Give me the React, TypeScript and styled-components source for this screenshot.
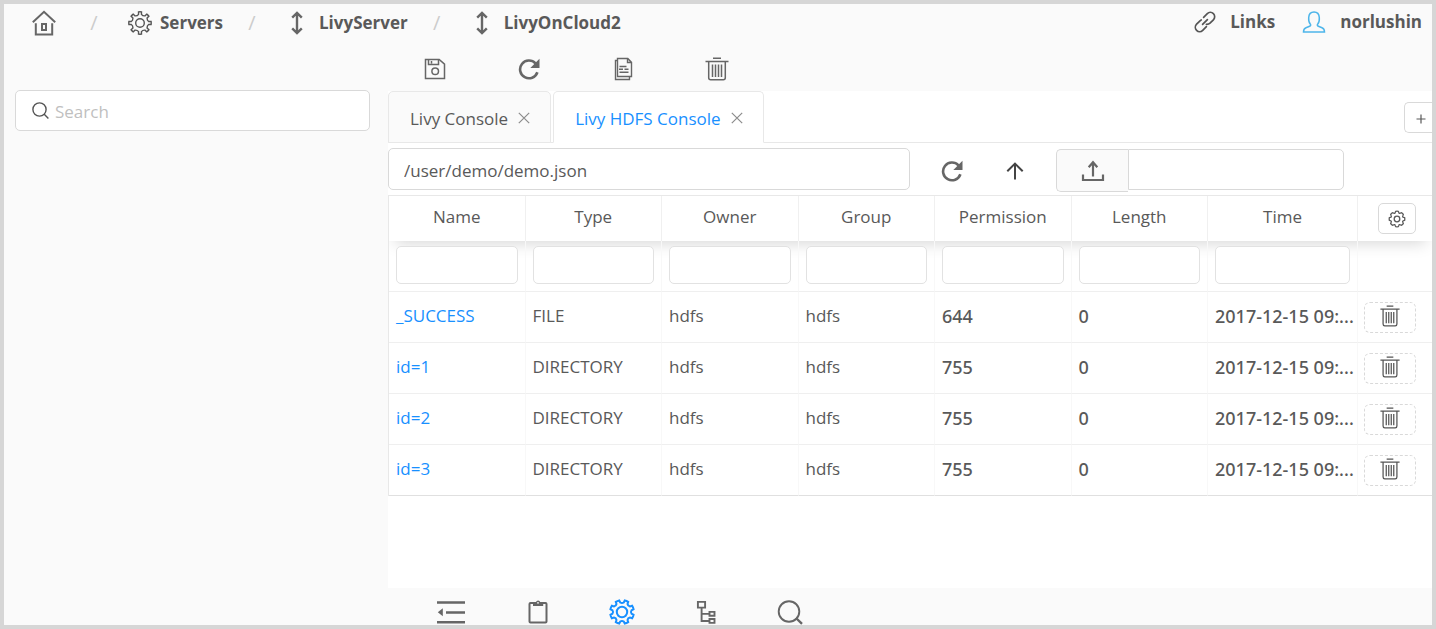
import React from "react";
import styled, { createGlobalStyle } from "styled-components";

const ink = "#595959";
const blue = "#1890ff";
const line = "#e8e8e8";
const control = "#d9d9d9";

const GlobalStyle = createGlobalStyle`
  *, *::before, *::after { box-sizing: border-box; }
  body {
    margin: 0;
    background: #fafafa;
    color: ${ink};
    font-family: "Open Sans", "Noto Sans", sans-serif;
    font-size: 17px;
    line-height: 24px;
  }
  button, input { font: inherit; color: inherit; }
  a { color: inherit; text-decoration: none; }
`;

const Frame = styled.div`
  display: flex;
  flex-direction: column;
  min-height: 100vh;
  border: 4px solid #d6d6d6;
  background: #fafafa;
  overflow: hidden;
`;

const Header = styled.header`
  display: flex;
  justify-content: space-between;
  height: 42px;
  padding: 0 10px 5px 27px;
`;

const Crumbs = styled.nav`
  display: flex;
  align-items: center;
`;

const Account = styled.div`
  display: flex;
  align-items: center;
  gap: 27px;
  padding-bottom: 2px;
`;

const NavLink = styled.a<{ $gap: number }>`
  display: flex;
  align-items: center;
  gap: ${(p) => p.$gap}px;
  font-size: 17px;
  font-weight: 700;
`;

const Slash = styled.span<{ $before?: number; $after: number }>`
  width: 8px;
  margin: 0 ${(p) => p.$after}px 0 ${(p) => p.$before ?? 25}px;
  text-align: center;
  font-size: 20px;
  color: #ccc;
`;

const Body = styled.div`
  display: flex;
  flex: 1;
`;

const Sidebar = styled.aside`
  flex: none;
  width: 384px;
  padding: 44px 18px 0 11px;
`;

const SearchBox = styled.label`
  display: flex;
  align-items: center;
  gap: 6px;
  height: 41px;
  padding: 0 16px;
  border: 1px solid ${control};
  border-radius: 5px;
  background: #fff;
`;

const SearchInput = styled.input`
  flex: 1;
  min-width: 0;
  padding: 2px 0 0;
  border: 0;
  outline: 0;
  background: transparent;
  &::placeholder { color: #bfbfbf; opacity: 1; }
`;

const Main = styled.main`
  display: flex;
  flex: 1;
  flex-direction: column;
  min-width: 0;
`;

const IconButton = styled.button<{ $width: number; $active?: boolean }>`
  display: flex;
  flex: none;
  align-items: center;
  justify-content: center;
  width: ${(p) => p.$width}px;
  padding: 0;
  border: 0;
  background: transparent;
  color: ${(p) => (p.$active ? blue : "#666")};
  cursor: pointer;
`;

const Toolbar = styled.div`
  display: flex;
  height: 45px;
`;

const Footer = styled.footer`
  display: flex;
  align-items: flex-start;
  height: 37px;
  padding: 11px 0 0 18px;
  overflow: hidden;
`;

const Content = styled.section`
  flex: 1;
  background: #fff;
`;

const TabBar = styled.div`
  display: flex;
  gap: 2px;
  height: 52px;
  border-bottom: 1px solid ${line};
`;

const Tab = styled.div<{ $active?: boolean }>`
  display: flex;
  align-items: center;
  gap: 10px;
  height: 52px;
  padding: 2px 20px 0 21px;
  border: 1px solid ${line};
  border-bottom-color: ${(p) => (p.$active ? "#fff" : line)};
  border-radius: 5px 5px 0 0;
  background: ${(p) => (p.$active ? "#fff" : "#fafafa")};
  color: ${(p) => (p.$active ? blue : ink)};
`;

const TabLabel = styled.button`
  padding: 2px 0 0;
  border: 0;
  background: transparent;
  cursor: pointer;
`;

const CloseButton = styled.button`
  display: flex;
  padding: 0;
  border: 0;
  background: transparent;
  color: #8c8c8c;
  cursor: pointer;
`;

const AddTab = styled.button`
  display: flex;
  align-items: center;
  justify-content: center;
  width: 28px;
  height: 31px;
  margin: 11px 0 0 auto;
  padding: 2px 0 0 4px;
  border: 1px solid ${control};
  border-right: 0;
  border-radius: 5px 0 0 5px;
  background: #fff;
`;

const PathBar = styled.div`
  display: flex;
  height: 52px;
  padding-top: 5px;
`;

const PathInput = styled.input`
  width: 50%;
  height: 42px;
  padding: 2px 15px 0;
  border: 1px solid ${control};
  border-radius: 5px;
  background: #fff;
`;

const PathActions = styled.div`
  display: flex;
  height: 46px;
  margin: 0 10px;
`;

const UploadGroup = styled.div`
  display: flex;
  width: 288px;
  padding-top: 1px;
`;

const UploadButton = styled.button`
  display: flex;
  align-items: center;
  justify-content: center;
  width: 72px;
  height: 43px;
  padding: 0;
  border: 1px solid ${control};
  border-right: 0;
  border-radius: 5px 0 0 5px;
  background: #fafafa;
  color: #666;
`;

const UploadInput = styled.input`
  flex: 1;
  min-width: 0;
  height: 41px;
  padding: 0 15px;
  border: 1px solid ${control};
  border-radius: 0 5px 5px 0;
`;

const Grid = styled.table`
  width: 100%;
  table-layout: fixed;
  border-collapse: separate;
  border-spacing: 0;
  border: solid ${line};
  border-width: 1px 0 0 1px;
`;

const Head = styled.thead`
  position: relative;
  box-shadow: 0 8px 16px -6px rgba(0, 0, 0, 0.17);
  clip-path: inset(0 0 -40px 0);
`;

const Rows = styled.tbody`
  position: relative;
  z-index: 1;
`;

const HeadCell = styled.th`
  height: 45px;
  padding: 0 7px 4px;
  border-right: 1px solid #f0f0f0;
  background: #fff;
  font-weight: 400;
  &:last-child { border-right: 0; padding: 0 16px 0 6px; }
`;

const Cell = styled.td<{ $numeric?: boolean }>`
  height: 51px;
  padding: 0 7px 2px;
  border-right: 1px solid #f8f8f8;
  border-bottom: 1px solid #efefef;
  white-space: nowrap;
  font-family: ${(p) => (p.$numeric ? '"Noto Sans", sans-serif' : "inherit")};
  font-size: ${(p) => (p.$numeric ? 18 : 17)}px;
  font-weight: ${(p) => (p.$numeric ? 500 : 400)};
  &:last-child { border-right: 0; padding: 0 16px 0 6px; }
  tr:last-child > & { border-bottom-color: #e0e0e0; }
`;

const FilterInput = styled.input`
  display: block;
  width: 100%;
  height: 38px;
  padding: 0 8px;
  border: 1px solid #e2e2e2;
  border-radius: 5px;
  background: #fff;
`;

const FileLink = styled.a`
  color: ${blue};
`;

const SettingsButton = styled.button`
  display: flex;
  align-items: center;
  justify-content: center;
  width: 38px;
  height: 31px;
  margin-left: auto;
  padding: 0;
  border: 1px solid ${control};
  border-radius: 5px;
  background: #fff;
`;

const DeleteButton = styled.button`
  display: flex;
  align-items: flex-start;
  justify-content: center;
  width: 52px;
  height: 31px;
  margin-left: auto;
  padding: 2px 0 0;
  border: 1px dashed ${control};
  border-radius: 6px;
  background: #fff;
  color: #555;
`;

type IconProps = {
  w: number;
  h: number;
  sw?: number;
  color?: string;
  children: React.ReactNode;
};

const Icon = ({ w, h, sw = 1.5, color = "currentColor", children }: IconProps) => (
  <svg
    width={w}
    height={h}
    viewBox={`0 0 ${w} ${h}`}
    fill="none"
    stroke={color}
    strokeWidth={sw}
    aria-hidden="true"
  >
    {children}
  </svg>
);

const gearPath = (c: number, outer: number, inner: number, teeth: number, top: number, base: number) => {
  const step = (Math.PI * 2) / teeth;
  const at = (r: number, a: number) =>
    `${(c + r * Math.sin(a)).toFixed(2)} ${(c - r * Math.cos(a)).toFixed(2)}`;
  let d = "";
  for (let i = 0; i < teeth; i++) {
    const a = i * step;
    d += `${i ? "L" : "M"}${at(inner, a - step * base)}L${at(outer, a - step * top)}`;
    d += `A${outer} ${outer} 0 0 1 ${at(outer, a + step * top)}L${at(inner, a + step * base)}`;
    d += `Q${at(inner - 1.4, a + step / 2)} ${at(inner, a + step * (1 - base))}`;
  }
  return d + "Z";
};

const HomeIcon = () => (
  <Icon w={26} h={26} sw={2} color="#666">
    <path d="M1.8 12.3 13 1.8l11.2 10.5M4.8 13.2v11.4h16.4V13.2" />
    <path d="M11 14h4v6h-4z" />
  </Icon>
);

const GearIcon = () => (
  <Icon w={24} h={24} sw={1.4} color="#555">
    <path d={gearPath(12, 11.2, 8.8, 8, 0.17, 0.21)} />
    <circle cx="12" cy="12" r="4.3" />
  </Icon>
);

const UpDownIcon = () => (
  <Icon w={12} h={24} sw={2.4} color="#666">
    <path d="M6 2v20M1.2 6.6 6 1.9l4.8 4.7M1.2 17.4 6 22.1l4.8-4.7" />
  </Icon>
);

const LinkIcon = () => (
  <Icon w={22} h={22} sw={1.7} color="#555">
    <g strokeLinecap="round">
      <path d="M9.6 6.3 13.3 2.7a4.3 4.3 0 0 1 6.1 6.1l-3.4 3.4q-1.5 1.4-3.6 1.2" />
      <path d="M12.4 15.7 8.7 19.3a4.3 4.3 0 0 1-6.1-6.1L6 9.8q.6-.5 1.2-.8" />
      <path d="M8.6 13.4l4.8-4.8" />
    </g>
  </Icon>
);

const UserIcon = () => (
  <Icon w={24} h={22} sw={1.5} color="#4db5ea">
    <path d="M8.4 13.2C6.6 11.5 6.5 9.4 6.7 6.6 6.9 3.3 9 1.1 12 1.1s5.1 2.2 5.3 5.5c.2 2.8.1 4.9-1.7 6.600-.6.8-.2 1.7.8 2.1l3.600 1.4c1.8.7 2.500 2 2.500 4.300h-21c0-2.300.7-3.600 2.500-4.300l3.600-1.400c1-.4 1.400-1.300.8-2.100z" />
  </Icon>
);

const SearchIcon = () => (
  <Icon w={17} h={17} sw={1.4} color="#555">
    <circle cx="7.500" cy="7.500" r="6.600" />
    <path d="M12 12l4.400 4.400" />
  </Icon>
);

const SaveIcon = () => (
  <Icon w={22} h={22} sw={1.5}>
    <path d="M1.500 1.500h13.700l5.300 4.600v14.400H1.500z" />
    <path d="M4.500 1.500v5h10V1.500M7.500 3v2.400" />
    <circle cx="11.200" cy="13.200" r="3.300" />
  </Icon>
);

const ReloadIcon = () => (
  <Icon w={22} h={22} sw={2.6}>
    <path d="M17.500 5.300A8.900 8.900 0 1 0 19.400 14.300" />
    <path d="M21.500 .8v9.200h-9.200z" fill="currentColor" stroke="none" />
  </Icon>
);

const DocumentIcon = () => (
  <Icon w={20} h={24} sw={1.4}>
    <path d="M4.500 1.500h10.300l3.700 3.900v14.100h-14zM14.500 1.800v3.700h4" />
    <path d="M4.500 3.500h-2v19h14v-3M6.500 9.500h7M6 12.300h4M11.500 12.300h4M6.500 15.200h9" />
  </Icon>
);

const TrashIcon = ({ small }: { small?: boolean }) => (
  <svg
    width={small ? 20 : 24}
    height={small ? 22 : 24}
    viewBox="0 0 24 24"
    preserveAspectRatio="none"
    fill="none"
    stroke="currentColor"
    strokeWidth="1.500"
    aria-hidden="true"
  >
    <path d="M8 1.200h8M.5 4.500h23M3.700 4.500v16.300q0 2 2 2h12.600q2 0 2-2V4.500" />
    <path d="M7.500 7.500v12.500M10.500 7.500v12.500M13.500 7.500v12.500M16.500 7.500v12.500" />
  </svg>
);

const UpIcon = () => (
  <Icon w={18} h={18} sw={2} color="#444">
    <path d="M9 17.500V1.800M1.300 9.300 9 1.600l7.700 7.700" />
  </Icon>
);

const UploadIcon = () => (
  <Icon w={24} h={22} sw={2.200}>
    <path d="M12 16.500V2M7.700 7.300 12 2.200l4.300 5.100M2 14.500v5.500h20v-5.500" />
  </Icon>
);

const CloseIcon = () => (
  <Icon w={12} h={12} sw={1.200}>
    <path d="M.8.8l10.400 10.400M11.200.8.8 11.200" />
  </Icon>
);

const PlusIcon = () => (
  <Icon w={10} h={10} sw={1.200}>
    <path d="M5 .5v9M.5 5h9" />
  </Icon>
);

const SettingIcon = () => (
  <Icon w={18} h={18} sw={1.300}>
    <path d={gearPath(9, 7.8, 6.9, 8, 0.2, 0.32)} />
    <circle cx="9" cy="9" r="2.800" />
  </Icon>
);

const OutdentIcon = () => (
  <Icon w={28} h={26} sw={2.600}>
    <path d="M0 3.500h28M9 13.500h19M0 23.200h28" />
    <path d="M.8 13.300l5-4v8z" fill="currentColor" stroke="none" />
  </Icon>
);

const ClipboardIcon = () => (
  <Icon w={20} h={26} sw={2}>
    <rect x="1.500" y="4" width="17" height="19.500" rx="1" />
    <path d="M5 3h3a2.200 2.200 0 0 1 4.200 0h3v4H5z" fill="currentColor" stroke="none" />
    <circle cx="10" cy="3.800" r=".9" fill="#fafafa" stroke="none" />
  </Icon>
);

const ActiveGearIcon = () => (
  <Icon w={26} h={26} sw={2}>
    <path d={gearPath(13, 11.9, 9.7, 8, 0.2, 0.27)} transform="rotate(22.500 13 13)" />
    <circle cx="13" cy="13" r="5.200" />
  </Icon>
);

const TreeIcon = () => (
  <Icon w={20} h={26} sw={1.900}>
    <path d="M1.900 2.900h7.200v5.700H1.900zM13.500 12.900h5v3.900h-5zM13.500 20h5v3.900h-5zM5.600 8.600v13.400h7.900M5.600 14.900h7.900" />
  </Icon>
);

const MagnifierIcon = () => (
  <Icon w={26} h={26} sw={1.900}>
    <circle cx="12" cy="12.500" r="10.300" />
    <path d="M19 19l6 5.800" strokeWidth="2.400" />
  </Icon>
);

const columns = ["Name", "Type", "Owner", "Group", "Permission", "Length", "Time"];

const files = [
  { name: "_SUCCESS", type: "FILE", permission: "644" },
  { name: "id=1", type: "DIRECTORY", permission: "755" },
  { name: "id=2", type: "DIRECTORY", permission: "755" },
  { name: "id=3", type: "DIRECTORY", permission: "755" },
];

const tools = [
  { label: "Save", icon: <SaveIcon /> },
  { label: "Reload", icon: <ReloadIcon /> },
  { label: "Documents", icon: <DocumentIcon /> },
  { label: "Delete", icon: <TrashIcon /> },
];

const views = [
  { label: "Collapse menu", icon: <OutdentIcon />, width: 90 },
  { label: "Clipboard", icon: <ClipboardIcon />, width: 84 },
  { label: "Settings", icon: <ActiveGearIcon />, width: 84, active: true },
  { label: "Tree", icon: <TreeIcon />, width: 84 },
  { label: "Search", icon: <MagnifierIcon />, width: 84 },
];

export default function App() {
  return (
    <>
      <GlobalStyle />
      <Frame>
        <Header>
          <Crumbs aria-label="Breadcrumb">
            <NavLink href="#" $gap={0} aria-label="Home"><HomeIcon /></NavLink>
            <Slash $before={33} $after={30}>/</Slash>
            <NavLink href="#servers" $gap={8}><GearIcon />Servers</NavLink>
            <Slash $after={35}>/</Slash>
            <NavLink href="#livy" $gap={16}><UpDownIcon />LivyServer</NavLink>
            <Slash $after={35}>/</Slash>
            <NavLink href="#cloud" $gap={16}><UpDownIcon />LivyOnCloud2</NavLink>
          </Crumbs>
          <Account>
            <NavLink href="#links" $gap={14}><LinkIcon />Links</NavLink>
            <NavLink href="#user" $gap={14}><UserIcon />norlushin</NavLink>
          </Account>
        </Header>
        <Body>
          <Sidebar>
            <SearchBox>
              <SearchIcon />
              <SearchInput type="text" placeholder="Search" aria-label="Search" />
            </SearchBox>
          </Sidebar>
          <Main>
            <Toolbar>
              {tools.map((t) => (
                <IconButton key={t.label} $width={94} aria-label={t.label}>{t.icon}</IconButton>
              ))}
            </Toolbar>
            <Content>
              <TabBar>
                <Tab>
                  <TabLabel>Livy Console</TabLabel>
                  <CloseButton aria-label="Close Livy Console"><CloseIcon /></CloseButton>
                </Tab>
                <Tab $active>
                  <TabLabel>Livy HDFS Console</TabLabel>
                  <CloseButton aria-label="Close Livy HDFS Console"><CloseIcon /></CloseButton>
                </Tab>
                <AddTab aria-label="Add tab"><PlusIcon /></AddTab>
              </TabBar>
              <PathBar>
                <PathInput type="text" defaultValue="/user/demo/demo.json" aria-label="Path" />
                <PathActions>
                  <IconButton $width={63} aria-label="Refresh"><ReloadIcon /></IconButton>
                  <IconButton $width={63} aria-label="Parent folder"><UpIcon /></IconButton>
                </PathActions>
                <UploadGroup>
                  <UploadButton aria-label="Upload"><UploadIcon /></UploadButton>
                  <UploadInput type="text" aria-label="Upload name" />
                </UploadGroup>
              </PathBar>
              <Grid>
                <colgroup>
                  {columns.map((c) => (
                    <col key={c} width={c === "Time" ? 150 : undefined} />
                  ))}
                  <col width={74} />
                </colgroup>
                <Head>
                  <tr>
                    {columns.map((c) => <HeadCell key={c} scope="col">{c}</HeadCell>)}
                    <HeadCell>
                      <SettingsButton aria-label="Table settings"><SettingIcon /></SettingsButton>
                    </HeadCell>
                  </tr>
                </Head>
                <Rows>
                  <tr>
                    {columns.map((c) => (
                      <Cell key={c}><FilterInput type="text" aria-label={`Filter by ${c}`} /></Cell>
                    ))}
                    <Cell />
                  </tr>
                  {files.map((f) => (
                    <tr key={f.name}>
                      <Cell><FileLink href="#file">{f.name}</FileLink></Cell>
                      <Cell>{f.type}</Cell>
                      <Cell>hdfs</Cell>
                      <Cell>hdfs</Cell>
                      <Cell $numeric>{f.permission}</Cell>
                      <Cell $numeric>0</Cell>
                      <Cell $numeric>2017-12-15 09:...</Cell>
                      <Cell>
                        <DeleteButton aria-label={`Delete ${f.name}`}><TrashIcon small /></DeleteButton>
                      </Cell>
                    </tr>
                  ))}
                </Rows>
              </Grid>
            </Content>
            <Footer>
              {views.map((v) => (
                <IconButton key={v.label} $width={v.width} $active={v.active} aria-label={v.label}>{v.icon}</IconButton>
              ))}
            </Footer>
          </Main>
        </Body>
      </Frame>
    </>
  );
}
